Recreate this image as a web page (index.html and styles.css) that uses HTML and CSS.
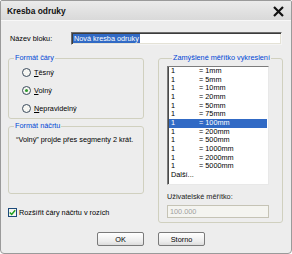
FILE: index.html
```html
<!DOCTYPE html>
<html lang="cs">
<head>
    <meta charset="UTF-8">
    <title>Kresba odruky</title>
    <link rel="stylesheet" href="styles.css">
</head>
<body>
<div class="window">
    <div class="titlebar">
        <span class="title">Kresba odruky</span>
        <svg class="close" width="11" height="11" viewBox="0 0 11 11">
            <path d="M1 1 L10 10 M10 1 L1 10" stroke="#111" stroke-width="2.2" fill="none"/>
        </svg>
    </div>
    <div class="content">
        <div class="name-row">
            <span class="name-label">Název bloku:</span>
            <div class="textbox"><span class="selected-text">Nová kresba odruky</span></div>
        </div>

        <div class="columns">
            <div class="left">
                <fieldset class="group line-format">
                    <legend>Formát čáry</legend>
                    <div class="radio"><span class="rb"></span><span><u>T</u>ěsný</span></div>
                    <div class="radio"><span class="rb checked"></span><span><u>V</u>olný</span></div>
                    <div class="radio"><span class="rb"></span><span><u>N</u>epravidelný</span></div>
                </fieldset>

                <fieldset class="group sketch-format">
                    <legend>Formát náčrtu</legend>
                    <p class="note">“Volný” projde přes segmenty 2 krát.</p>
                </fieldset>

                <div class="check">
                    <span class="cb">
                        <svg width="7" height="7" viewBox="0 0 7 7">
                            <path d="M0.8 3.4 L2.7 5.4 L6.2 1.2" stroke="#21a121" stroke-width="1.5" fill="none"/>
                        </svg>
                    </span>
                    <span>Rozšířit čáry náčrtu v rozích</span>
                </div>
            </div>

            <fieldset class="group scale">
                <legend>Zamýšlené měřítko vykreslení</legend>
                <div class="listbox">
                    <div class="row"><span>1</span><span>= 1mm</span></div>
                    <div class="row"><span>1</span><span>= 5mm</span></div>
                    <div class="row"><span>1</span><span>= 10mm</span></div>
                    <div class="row"><span>1</span><span>= 20mm</span></div>
                    <div class="row"><span>1</span><span>= 50mm</span></div>
                    <div class="row"><span>1</span><span>= 75mm</span></div>
                    <div class="row active"><span>1</span><span>= 100mm</span></div>
                    <div class="row"><span>1</span><span>= 200mm</span></div>
                    <div class="row"><span>1</span><span>= 500mm</span></div>
                    <div class="row"><span>1</span><span>= 1000mm</span></div>
                    <div class="row"><span>1</span><span>= 2000mm</span></div>
                    <div class="row"><span>1</span><span>= 5000mm</span></div>
                    <div class="row more">Další...</div>
                </div>
                <div class="custom-label">Uživatelské měřítko:</div>
                <div class="textbox disabled">100.000</div>
            </fieldset>
        </div>

        <div class="buttons">
            <button type="button" class="btn">OK</button>
            <button type="button" class="btn">Storno</button>
        </div>
    </div>
</div>
</body>
</html>
```

FILE: styles.css
```css
body {
    margin: 0;
    background: #ffffff;
    font-family: "Liberation Sans", Arial, sans-serif;
    font-size: 7.3px;
    color: #000000;
}

.window {
    box-sizing: border-box;
    width: 292px;
    height: 254px;
    background: #ededed;
    border: 1px solid #9a9a9a;
    border-radius: 2px 2px 4px 4px;
    overflow: hidden;
}

.titlebar {
    height: 19px;
    display: flex;
    align-items: center;
    justify-content: space-between;
    padding: 0 7px 0 6px;
    background: linear-gradient(#ebebeb, #d9d9d9);
    border-bottom: 1px solid #f8f8f8;
}

.title {
    font-weight: bold;
    font-size: 8.4px;
    color: #111111;
}

.close {
    margin-top: 1px;
}

.content {
    padding: 0 8px 0 7px;
}

.name-row {
    display: flex;
    align-items: center;
    margin-top: 11px;
    margin-right: 1px;
}

.name-label {
    width: 61px;
    padding-left: 2px;
}

.textbox {
    box-sizing: border-box;
    flex: 1;
    height: 13px;
    background: #ffffff;
    border: 1px solid;
    border-color: #6e6e6e #f4f4f4 #f4f4f4 #6e6e6e;
    box-shadow: inset 1px 1px 0 #3c3c3c, inset -1px -1px 0 #e4e2d6;
    padding: 1px 0 0 1px;
    line-height: 9px;
}

.selected-text {
    display: inline-block;
    background: #316ac5;
    color: #ffffff;
    padding: 0 1px;
}

.columns {
    display: flex;
    gap: 14px;
    margin-top: 8px;
}

.left {
    width: 136px;
}

.group {
    box-sizing: border-box;
    margin: 0;
    padding: 0;
    min-width: 0;
    border: 1px solid #d0d0bf;
    border-radius: 3px;
}

.group legend {
    margin-left: 5px;
    padding: 0 1px;
    line-height: 10px;
    color: #0046d5;
}

.line-format {
    height: 66px;
}

.radio {
    display: flex;
    align-items: center;
    height: 18px;
    padding-left: 13px;
    gap: 3px;
}

.rb {
    box-sizing: border-box;
    width: 9px;
    height: 9px;
    border: 1px solid #3a4a5c;
    border-radius: 50%;
    background: #f6f6f2;
    display: flex;
    align-items: center;
    justify-content: center;
}

.rb.checked::after {
    content: "";
    width: 3px;
    height: 3px;
    border-radius: 50%;
    background: #2f9a2f;
}

.sketch-format {
    height: 73px;
    margin-top: 2px;
}

.note {
    margin: 4px 0 0 7px;
    line-height: 10px;
}

.check {
    display: flex;
    align-items: center;
    gap: 2px;
    margin-top: 14px;
    height: 9px;
}

.cb {
    box-sizing: border-box;
    width: 9px;
    height: 9px;
    border: 1px solid #1c4a7a;
    background: #f4f4f0;
    display: flex;
    align-items: center;
    justify-content: center;
}

.scale {
    width: 125px;
    height: 170px;
    padding: 0 0 0 8px;
}

.listbox {
    box-sizing: border-box;
    width: 102px;
    height: 119px;
    margin-top: 3px;
    background: #ffffff;
    border: 1px solid;
    border-color: #7c7c7c #e8e8e8 #e8e8e8 #7c7c7c;
    box-shadow: inset 1px 0 0 #4a4a4a;
    padding-top: 0;
}

.row {
    display: grid;
    grid-template-columns: 28px auto;
    height: 8.67px;
    line-height: 8.67px;
    padding-left: 2px;
    margin-right: 1px;
    margin-left: 1px;
}

.row.active {
    background: #316ac5;
    color: #ffffff;
}

.row.more {
    display: block;
}

.custom-label {
    margin-top: 7px;
    line-height: 10px;
    color: #222222;
}

.textbox.disabled {
    flex: none;
    width: 102px;
    margin-top: 3px;
    background: #f4f4f0;
    color: #a0a0a0;
    border-color: #c5c3b5;
    box-shadow: none;
    padding-left: 2px;
    line-height: 10px;
}

.buttons {
    display: flex;
    gap: 14px;
    margin-top: 9px;
    padding-left: 89px;
}

.btn {
    box-sizing: border-box;
    width: 47px;
    height: 14px;
    padding: 0;
    font-family: "Liberation Sans", Arial, sans-serif;
    font-size: 7.3px;
    color: #000000;
    background: linear-gradient(#ffffff, #ececec 70%, #dcdcdc);
    border: 1px solid #7a7a7a;
    border-radius: 2px;
}
```
